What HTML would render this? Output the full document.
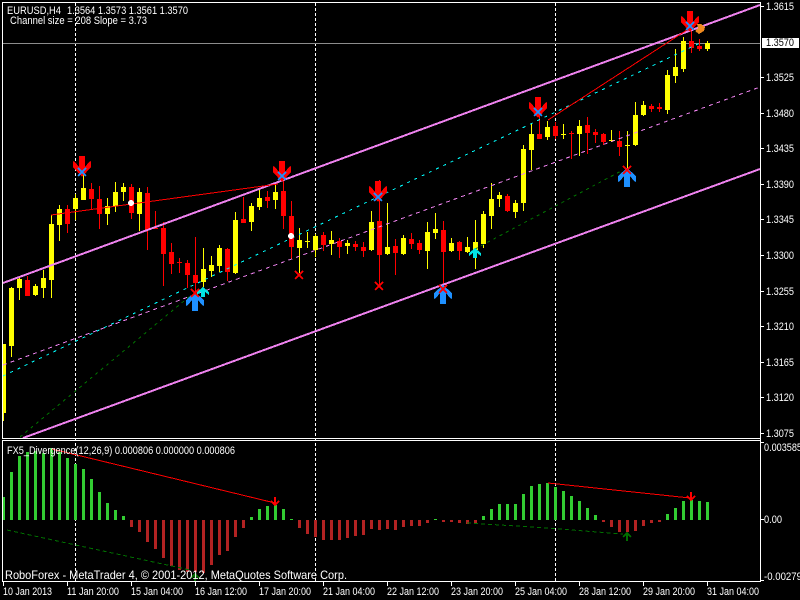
<!DOCTYPE html>
<html><head><meta charset="utf-8"><style>
html,body{margin:0;padding:0;background:#000;width:800px;height:600px;overflow:hidden}
svg{display:block}
text{font-family:"Liberation Sans",sans-serif;font-size:11px;fill:#fff}
</style></head><body>
<svg width="800" height="600" viewBox="0 0 800 600" xmlns="http://www.w3.org/2000/svg" shape-rendering="crispEdges">
<defs>
<path id="dn" d="M-3 0h6v11L7 6l2-1 0 6L0 21-9 11V5l2 1 4 5z"/>
<path id="up" d="M-3 0h6v-11L7-6l2 1V-11L0-19-9-11v6l2-1 4-5z"/>
<path id="x" d="M-4-4 4 4M4-4-4 4" fill="none" stroke-width="2"/>
</defs>
<rect width="800" height="600" fill="#000"/>
<!-- grid -->
<g stroke="#fff" stroke-dasharray="3 2">
<path d="M75.500 3V581M315.500 3V581M555.500 3V581"/>
</g>
<!-- bid line -->
<path d="M3 43.500H760" stroke="#8c8c8c"/>
<!-- wicks and bodies -->
<g>
<path fill="none" stroke="#ff0" d="M3.500 344V421M11.500 287V357M19.500 277V300M35.500 284V296M43.500 270V298M51.500 215V298M59.500 205V241M75.500 194V220M83.500 175V200M107.500 198V225M115.500 182V212M123.500 183V201M139.500 188V231M203.500 248V287M211.500 256V277M219.500 245V272M235.500 212V274M251.500 203V231M259.500 190V210M275.500 185V209M299.500 228V273M307.500 232V248M315.500 234V257M331.500 231V255M347.500 240V254M371.500 211V251M387.500 203V255M403.500 235V255M427.500 222V269M435.500 213V239M451.500 238V252M467.500 237V253M475.500 220V269M483.500 211V248M491.500 183V229M499.500 192V207M515.500 200V218M523.500 145V211M531.500 123V170M547.500 121V140M563.500 124V139M579.500 120V156M611.500 130V142M627.500 131V170M635.500 102V146M643.500 101V116M667.500 70V114M675.500 49V83M683.500 37V72M707.500 41V51"/>
<path fill="#ff0" d="M3 344h3v69h-3zM9 288h5v58H9zM17 279h5v9h-5zM33 286h5v9h-5zM41 278h5v10h-5zM49 224h5v56h-5zM57 209h5v16h-5zM73 198h5v11h-5zM81 188h5v12h-5zM105 206h5v8h-5zM113 192h5v14h-5zM121 187h5v5h-5zM137 192h5v22h-5zM201 269h5v13h-5zM209 265h5v6h-5zM217 248h5v18h-5zM233 220h5v53h-5zM249 206h5v16h-5zM257 198h5v9h-5zM273 192h5v8h-5zM297 240h5v8h-5zM305 241h5v1h-5zM313 236h5v14h-5zM329 240h5v4h-5zM345 243h5v3h-5zM369 222h5v28h-5zM385 247h5v7h-5zM401 238h5v16h-5zM425 232h5v19h-5zM433 229h5v4h-5zM449 243h5v8h-5zM465 247h5v5h-5zM473 242h5v8h-5zM481 214h5v30h-5zM489 199h5v17h-5zM497 195h5v4h-5zM513 203h5v9h-5zM521 149h5v54h-5zM529 134h5v16h-5zM545 127h5v10h-5zM561 134h5v1h-5zM577 126h5v8h-5zM609 140h5v1h-5zM625 145h5v1h-5zM633 115h5v30h-5zM641 105h5v10h-5zM665 75h5v35h-5zM673 67h5v9h-5zM681 41h5v28h-5zM705 43h5v6h-5z"/>
<path fill="none" stroke="#f00" d="M27.500 276V296M67.500 205V233M91.500 183V210M99.500 186V229M131.500 184V219M147.500 187V250M155.500 211V229M163.500 222V286M171.500 243V274M179.500 258V273M187.500 260V288M195.500 237V295M227.500 248V281M243.500 197V223M267.500 191V208M283.500 176V229M291.500 201V259M323.500 232V251M339.500 238V258M355.500 241V251M363.500 242V257M379.500 180V287M395.500 239V275M411.500 233V249M419.500 240V254M443.500 221V285M459.500 241V260M507.500 194V212M539.500 110V139M555.500 122V139M571.500 131V159M587.500 117V154M595.500 129V143M603.500 133V145M619.500 131V156M651.500 104V112M659.500 103V112M691.500 20V53M699.500 39V51"/>
<path fill="#f00" d="M25 280h5v16h-5zM65 209h5v15h-5zM89 189h5v10h-5zM97 199h5v15h-5zM129 187h5v26h-5zM145 193h5v37h-5zM153 228h5v1h-5zM161 228h5v26h-5zM169 252h5v12h-5zM177 262h5v1h-5zM185 263h5v12h-5zM193 275h5v8h-5zM225 249h5v23h-5zM241 219h5v4h-5zM265 197h5v4h-5zM281 191h5v25h-5zM289 216h5v31h-5zM321 235h5v10h-5zM337 241h5v6h-5zM353 244h5v3h-5zM361 247h5v4h-5zM377 221h5v34h-5zM393 246h5v7h-5zM409 239h5v5h-5zM417 243h5v7h-5zM441 230h5v22h-5zM457 242h5v9h-5zM505 196h5v15h-5zM537 134h5v5h-5zM553 126h5v10h-5zM569 133h5v1h-5zM585 125h5v8h-5zM593 132h5v3h-5zM601 134h5v8h-5zM617 141h5v6h-5zM649 106h5v3h-5zM657 107h5v2h-5zM689 41h5v7h-5zM697 46h5v3h-5z"/>
</g>
<!-- channel lines -->
<path d="M3 283 760 5M23 438 760 169" stroke="#ee82ee" stroke-width="2" fill="none"/>
<path d="M3 365 760 87" stroke="#ee82ee" stroke-dasharray="4 4" fill="none"/>
<path d="M3 376 700 43" stroke="#0ff" stroke-dasharray="3 5" fill="none"/>
<path d="M20 437 190 296M475 249 623 170" stroke="#007000" stroke-dasharray="3 4" fill="none"/>
<path d="M51 215 278 184M548 120 690 28" stroke="#f00" fill="none"/>
<!-- markers -->
<g fill="#f00">
<use href="#dn" x="82" y="156"/><use href="#dn" x="282" y="161"/><use href="#dn" x="378" y="181"/><use href="#dn" x="538" y="97"/><use href="#dn" x="690" y="11"/>
</g>
<g fill="#1e90ff">
<use href="#up" x="195" y="311"/><use href="#up" x="443" y="304"/><use href="#up" x="627" y="187"/>
</g>
<path d="M203 287l6 5v3l-4-3v5h-4v-5l-4 3v-3zM475 248l6 5v3l-4-3v5h-4v-5l-4 3v-3z" fill="#00e5e5"/>
<g stroke="#1e90ff"><use href="#x" x="82" y="172"/><use href="#x" x="282" y="176"/><use href="#x" x="378" y="197"/><use href="#x" x="538" y="112"/><use href="#x" x="690" y="26"/></g>
<g stroke="#f00"><use href="#x" x="195" y="293"/><use href="#x" x="443" y="289"/><use href="#x" x="627" y="170"/><use href="#x" x="299" y="275"/><use href="#x" x="379" y="286"/></g>
<circle cx="131" cy="203" r="3" fill="#fff"/><circle cx="291" cy="236" r="3" fill="#fff"/>
<path d="M697 24h4l4 3-1 4-5 3-4-3 3-3z" fill="#f08a1e"/>
<!-- histogram -->
<g>
<path fill="#32cd32" d="M3 497h2v23H3zM10 472h3v48h-3zM18 456h3v64h-3zM26 452h3v68h-3zM34 451h3v69h-3zM42 453h3v67h-3zM50 448h3v72h-3zM58 452h3v68h-3zM66 458h3v62h-3zM74 464h3v56h-3zM82 469h3v51h-3zM90 479h3v41h-3zM98 492h3v28h-3zM106 503h3v17h-3zM114 510h3v10h-3zM122 516h3v4h-3zM250 517h3v3h-3zM258 509h3v11h-3zM266 506h3v14h-3zM274 505h3v15h-3zM282 509h3v11h-3zM290 519h3v1h-3zM434 519h3v1h-3zM482 516h3v4h-3zM490 509h3v11h-3zM498 504h3v16h-3zM506 504h3v16h-3zM514 504h3v16h-3zM522 494h3v26h-3zM530 486h3v34h-3zM538 484h3v36h-3zM546 483h3v37h-3zM554 487h3v33h-3zM562 491h3v29h-3zM570 496h3v24h-3zM578 501h3v19h-3zM586 508h3v12h-3zM594 515h3v5h-3zM666 514h3v6h-3zM674 508h3v12h-3zM682 501h3v19h-3zM690 500h3v20h-3zM698 501h3v19h-3zM706 502h3v18h-3z"/>
<path fill="#b22222" d="M130 520h3v7h-3zM138 520h3v12h-3zM146 520h3v22h-3zM154 520h3v29h-3zM162 520h3v38h-3zM170 520h3v46h-3zM178 520h3v50h-3zM186 520h3v52h-3zM194 520h3v52h-3zM202 520h3v53h-3zM210 520h3v45h-3zM218 520h3v35h-3zM226 520h3v31h-3zM234 520h3v17h-3zM242 520h3v8h-3zM298 520h3v8h-3zM306 520h3v14h-3zM314 520h3v17h-3zM322 520h3v20h-3zM330 520h3v20h-3zM338 520h3v20h-3zM346 520h3v18h-3zM354 520h3v16h-3zM362 520h3v15h-3zM370 520h3v9h-3zM378 520h3v10h-3zM386 520h3v9h-3zM394 520h3v10h-3zM402 520h3v7h-3zM410 520h3v6h-3zM418 520h3v6h-3zM426 520h3v3h-3zM442 520h3v2h-3zM450 520h3v2h-3zM458 520h3v3h-3zM466 520h3v4h-3zM474 520h3v3h-3zM602 520h3v2h-3zM610 520h3v7h-3zM618 520h3v12h-3zM626 520h3v12h-3zM634 520h3v11h-3zM642 520h3v6h-3zM650 520h3v3h-3zM658 520h3v2h-3z"/>
</g>
<path d="M52 449 275 503M548 483 690 498" stroke="#f00" fill="none"/>
<path d="M7 530 190 570M467 523 533 527 623 534" stroke="#007000" stroke-dasharray="4 3" fill="none"/>
<path d="M275 497v7M271 501l4 4 4-4M691 492v7M687 496l4 4 4-4" stroke="#f00" stroke-width="2" fill="none"/>
<path d="M627 541v-7M623 537l4-4 4 4M195 581v-7M191 578l4-4 4 4" stroke="#007000" stroke-width="2" fill="none"/>
<!-- frame -->
<g fill="#fff">
<path d="M2 2h759v1H2zM2 2h1v437H2zM2 438h759v1H2zM2 440h759v1H2zM2 440h1v142H2zM2 581h759v1H2zM760 2h1v580h-1z"/>
<path d="M761 6h3v1h-3zM761 77h3v1h-3zM761 113h3v1h-3zM761 148h3v1h-3zM761 184h3v1h-3zM761 219h3v1h-3zM761 255h3v1h-3zM761 291h3v1h-3zM761 326h3v1h-3zM761 362h3v1h-3zM761 397h3v1h-3zM761 433h3v1h-3zM761 442h3v1h-3zM761 519h3v1h-3zM761 580h3v1h-3z"/>
<path d="M3 582h1v4H3zM67 582h1v4h-1zM131 582h1v4h-1zM195 582h1v4h-1zM259 582h1v4h-1zM323 582h1v4h-1zM387 582h1v4h-1zM451 582h1v4h-1zM515 582h1v4h-1zM579 582h1v4h-1zM643 582h1v4h-1zM707 582h1v4h-1z"/>
<rect x="762" y="38" width="37" height="10"/>
</g>
<!-- texts -->
<text x="7" y="14" textLength="54" lengthAdjust="spacingAndGlyphs">EURUSD,H4</text>
<text x="67" y="14" textLength="121" lengthAdjust="spacingAndGlyphs">1.3564 1.3573 1.3561 1.3570</text>
<text x="10" y="24" textLength="137" lengthAdjust="spacingAndGlyphs">Channel size = 208 Slope = 3.73</text>
<text x="7" y="454" textLength="228" lengthAdjust="spacingAndGlyphs">FX5_Divergence(12,26,9) 0.000806 0.000000 0.000806</text>
<text x="5" y="579" style="font-size:12px" textLength="342" lengthAdjust="spacingAndGlyphs">RoboForex - MetaTrader 4, © 2001-2012, MetaQuotes Software Corp.</text>
<g>
<text x="766" y="10" textLength="28" lengthAdjust="spacingAndGlyphs">1.3615</text>
<text x="766" y="46" textLength="28" lengthAdjust="spacingAndGlyphs" style="fill:#000">1.3570</text>
<text x="766" y="81" textLength="28" lengthAdjust="spacingAndGlyphs">1.3525</text>
<text x="766" y="117" textLength="28" lengthAdjust="spacingAndGlyphs">1.3480</text>
<text x="766" y="152" textLength="28" lengthAdjust="spacingAndGlyphs">1.3435</text>
<text x="766" y="188" textLength="28" lengthAdjust="spacingAndGlyphs">1.3390</text>
<text x="766" y="223" textLength="28" lengthAdjust="spacingAndGlyphs">1.3345</text>
<text x="766" y="259" textLength="28" lengthAdjust="spacingAndGlyphs">1.3300</text>
<text x="766" y="295" textLength="28" lengthAdjust="spacingAndGlyphs">1.3255</text>
<text x="766" y="330" textLength="28" lengthAdjust="spacingAndGlyphs">1.3210</text>
<text x="766" y="366" textLength="28" lengthAdjust="spacingAndGlyphs">1.3165</text>
<text x="766" y="401" textLength="28" lengthAdjust="spacingAndGlyphs">1.3120</text>
<text x="766" y="437" textLength="28" lengthAdjust="spacingAndGlyphs">1.3075</text>
<text x="764" y="451" textLength="38" lengthAdjust="spacingAndGlyphs">0.003585</text>
<text x="764" y="523" textLength="18" lengthAdjust="spacingAndGlyphs">0.00</text>
<text x="764" y="580" textLength="38" lengthAdjust="spacingAndGlyphs">-0.00279</text>
</g>
<g>
<text x="3" y="595" textLength="49" lengthAdjust="spacingAndGlyphs">10 Jan 2013</text>
<text x="67" y="595" textLength="52" lengthAdjust="spacingAndGlyphs">11 Jan 20:00</text>
<text x="131" y="595" textLength="52" lengthAdjust="spacingAndGlyphs">15 Jan 04:00</text>
<text x="195" y="595" textLength="52" lengthAdjust="spacingAndGlyphs">16 Jan 12:00</text>
<text x="259" y="595" textLength="52" lengthAdjust="spacingAndGlyphs">17 Jan 20:00</text>
<text x="323" y="595" textLength="52" lengthAdjust="spacingAndGlyphs">21 Jan 04:00</text>
<text x="387" y="595" textLength="52" lengthAdjust="spacingAndGlyphs">22 Jan 12:00</text>
<text x="451" y="595" textLength="52" lengthAdjust="spacingAndGlyphs">23 Jan 20:00</text>
<text x="515" y="595" textLength="52" lengthAdjust="spacingAndGlyphs">25 Jan 04:00</text>
<text x="579" y="595" textLength="52" lengthAdjust="spacingAndGlyphs">28 Jan 12:00</text>
<text x="643" y="595" textLength="52" lengthAdjust="spacingAndGlyphs">29 Jan 20:00</text>
<text x="707" y="595" textLength="52" lengthAdjust="spacingAndGlyphs">31 Jan 04:00</text>
</g>
</svg>
</body></html>
